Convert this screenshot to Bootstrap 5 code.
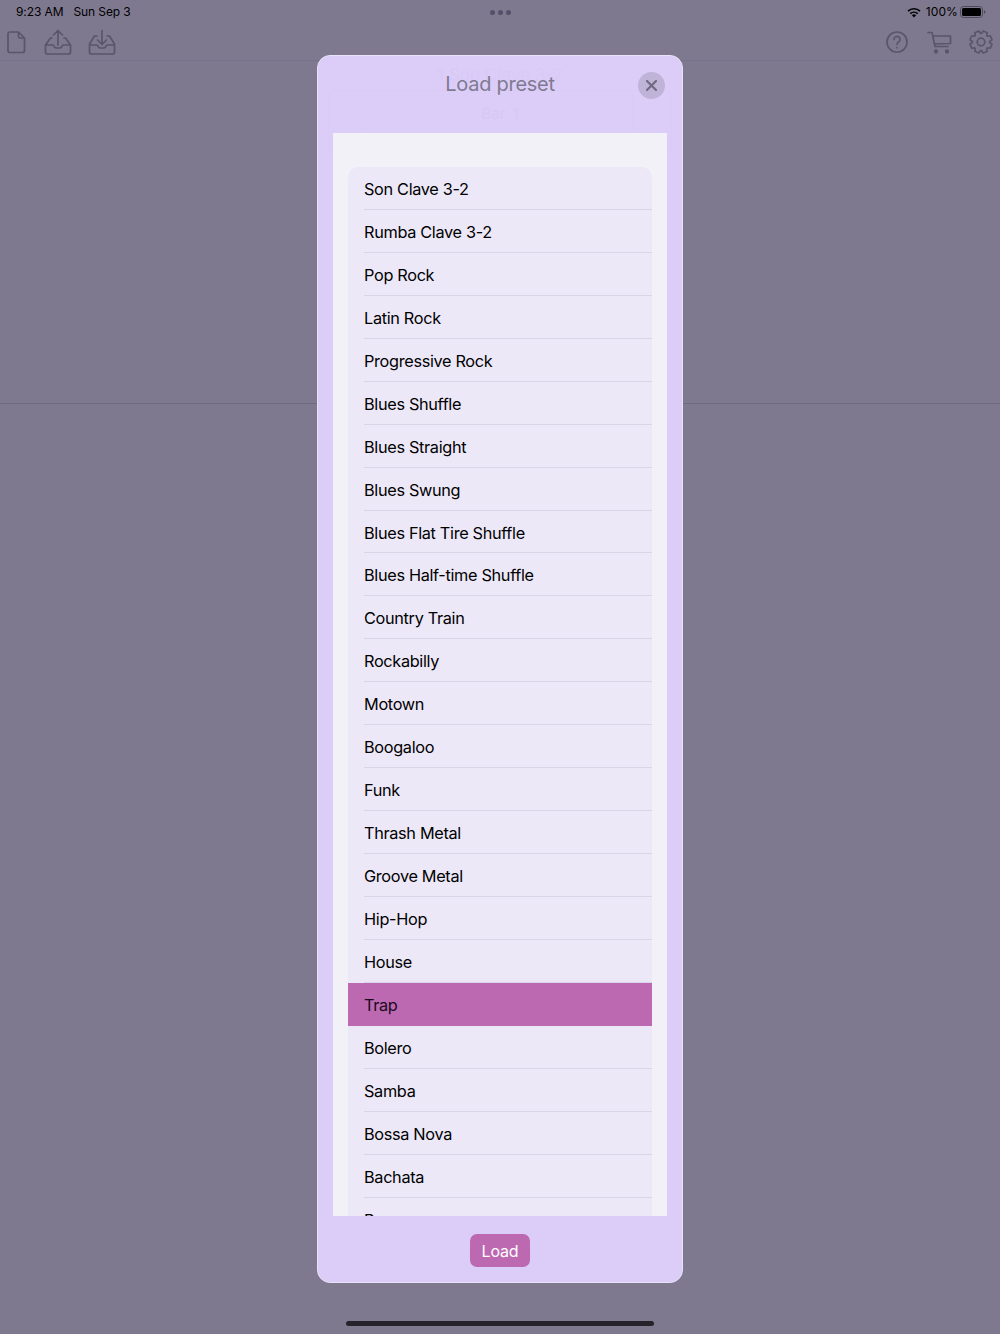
<!DOCTYPE html>
<html lang="en">
<head>
  <meta charset="UTF-8">
  <title>Load preset</title>
  <link href="https://cdn.jsdelivr.net/npm/bootstrap@5.3.3/dist/css/bootstrap.min.css" rel="stylesheet">
  <style>
    body { background: #7f798f; font-family: Inter, "Liberation Sans", sans-serif; height: 1334px; overflow: hidden; position: relative; }
    .status-row { height: 24px; padding: 0 16px; font-size: 12px; color: #000; letter-spacing: -.1px; }
    .status-date { margin-left: 2px; }
    .status-dots { gap: 3px; }
    .status-dots i { width: 5px; height: 5px; border-radius: 50%; background: #55506a; display: block; }
    .status-third { flex: 1 1 0; }
    .status-pct { letter-spacing: .1px; margin-left: 1px; margin-right: -2px; }
    .status-batt { margin-right: -2px; }
    .tool-row { height: 37px; padding: 0 7px; border-bottom: 1px solid #77718a; }
    .tool-row svg { display: block; fill: none; stroke: #59556a; stroke-width: 1.7; stroke-linecap: round; stroke-linejoin: round; }
    .tool-doc { margin-right: 18px; }
    .tool-down { margin-left: 16px; }
    .tool-cart { margin-left: 19px; }
    .tool-gear { margin-left: 17px; }
    .mid-rule { height: 1px; background: #6f6a80; margin-top: 342px; }
    .sheet { position: absolute; left: 317px; top: 55px; width: 366px; height: 1228px; background: #dbcdf8; border: 1px solid #e9e2f9; border-radius: 13px; overflow: hidden; }
    .sheet-head { height: 77px; position: relative; }
    .ghost-frame { position: absolute; left: 10px; right: 10px; top: 34px; height: 60px; border: 1px solid #d9cbf6; border-radius: 6px; }
    .ghost-frame::before, .ghost-frame::after { content: ""; position: absolute; top: 0; bottom: 0; width: 1px; background: #d9cbf6; }
    .ghost-frame::before { left: 36px; }
    .ghost-frame::after { right: 38px; }
    .ghost-song { position: absolute; left: 0; right: 0; top: 9px; font-size: 17px; color: #d8caf5; line-height: 20px; }
    .sheet-title { position: relative; font-size: 20px; line-height: 57px; color: #7f7a90; letter-spacing: -.28px; }
    .ghost-bar { position: relative; font-size: 15px; color: #d6c8f3; line-height: 1; margin-top: -7px; word-spacing: 3px; }
    .close-round { position: absolute; top: 16px; right: 17px; width: 27px; height: 27px; border-radius: 50%; background: #c0b3d8; border: 0; padding: 0; }
    .close-round svg { display: block; margin: auto; stroke: #6f6a80; stroke-width: 2.2; stroke-linecap: round; }
    .sheet-body { position: relative; height: 1083px; margin: 0 15px; background: #f2f1f8; padding: 34px 15px 0; overflow: hidden; }
    .preset-list { border-radius: 10px 10px 0 0; overflow: hidden; background: #ede8f8; }
    .preset-row { height: 42.95px; padding-left: 16px; font-size: 16.3px; color: #000; letter-spacing: -.33px; line-height: 43px; }
    .preset-row span { display: block; height: 100%; padding-top: 1px; border-bottom: 1px solid #d9d5e6; }
    .preset-row.picked { background: #bc69b2; color: #1a0a1c; }
    .preset-row.picked span { border-bottom-color: transparent; }
    .sheet-foot { height: 66px; padding-top: 3px; }
    .load-btn { background: #bc69b2; color: #fff; border: 0; border-radius: 7px; width: 60px; height: 33px; padding: 0; font-size: 16px; letter-spacing: -.2px; }
    .home-bar { position: absolute; left: 346px; top: 1321px; width: 308px; height: 5px; border-radius: 3px; background: #26242a; }
  </style>
</head>
<body>

  <!-- status bar -->
  <div class="status-row d-flex align-items-center">
    <div class="status-third d-flex gap-2"><span>9:23 AM</span><span class="status-date">Sun Sep 3</span></div>
    <div class="status-dots d-flex"><i></i><i></i><i></i></div>
    <div class="status-third d-flex justify-content-end align-items-center gap-1">
      <svg width="14" height="11" viewBox="0 0 14 11"><path d="M7 10.6 4.9 8.2a3 3 0 0 1 4.2 0z" fill="#000"/><path d="M3.3 6.7a5.4 5.4 0 0 1 7.4 0M1 4.2a8.6 8.6 0 0 1 12 0" fill="none" stroke="#000" stroke-width="1.7"/></svg>
      <span class="status-pct">100%</span>
      <svg class="status-batt" width="26" height="12" viewBox="0 0 26 12"><rect x=".5" y=".5" width="22" height="11" rx="3" fill="none" stroke="#4d4a58"/><rect x="2" y="2" width="19" height="8" rx="1.6" fill="#000"/><path d="M24 4.2c1 .3 1.4 1 1.4 1.8s-.4 1.5-1.4 1.8z" fill="#4d4a58"/></svg>
    </div>
  </div>

  <!-- toolbar -->
  <div class="tool-row d-flex align-items-center justify-content-between">
    <div class="d-flex align-items-center">
      <svg class="tool-doc" width="19" height="24" viewBox="0 0 19 24"><path d="M3 2h8.500L17.500 8v12.500a2 2 0 0 1-2 2H3a2 2 0 0 1-2-2V4a2 2 0 0 1 2-2zM11.500 2v4.500a1.500 1.500 0 0 0 1.500 1.500h4.500"/></svg>
      <svg width="28" height="26" viewBox="0 0 28 26"><path d="M14 16V2M9.500 6 14 1.500 18.500 6M8 9H6.500L1.500 16v7a2 2 0 0 0 2 2h21a2 2 0 0 0 2-2v-7l-5-7H20M1.500 16h7.500c1 0 1 3 3 3h4c2 0 2-3 3-3h7.500"/></svg>
      <svg class="tool-down" width="28" height="26" viewBox="0 0 28 26"><path d="M14 1.500V15M9.500 11 14 15.500 18.500 11M9 7H6.500L1.500 15v8a2 2 0 0 0 2 2h21a2 2 0 0 0 2-2v-8l-5-8H19M1.500 16h7.500c1 0 1 3 3 3h4c2 0 2-3 3-3h7.500"/></svg>
    </div>
    <div class="d-flex align-items-center">
      <svg width="22" height="22" viewBox="0 0 22 22"><circle cx="11" cy="11" r="10"/><path d="M8 8.500a3 3 0 1 1 4.600 2.500c-1 .7-1.600 1.200-1.600 2.500M11 16.500v.2"/></svg>
      <svg class="tool-cart" width="25" height="23" viewBox="0 0 25 23"><path d="M1 1.500h4l3 14h13M5.800 5h17.700v7.500L7.300 13"/><circle cx="9" cy="20.500" r="1.300" fill="#59556a"/><circle cx="20" cy="20.500" r="1.300" fill="#59556a"/></svg>
      <svg class="tool-gear" width="24" height="24" viewBox="0 0 24 24"><circle cx="12" cy="12" r="3.800"/><path id="gearPath"/></svg>
    </div>
  </div>
  <div class="mid-rule"></div>

  <!-- load preset sheet -->
  <div class="sheet d-flex flex-column">
    <div class="sheet-head text-center">
      <div class="ghost-song">1 Son Clave 3-2</div>
      <div class="ghost-frame"></div>
      <div class="sheet-title">Load preset</div>
      <div class="ghost-bar">Bar 1</div>
      <button type="button" class="close-round" aria-label="Close">
        <svg width="11" height="11" viewBox="0 0 11 11"><path d="M1 1l9 9M10 1l-9 9"/></svg>
      </button>
    </div>
    <div class="sheet-body">
      <div class="preset-list" id="presetList"></div>
    </div>
    <div class="sheet-foot d-flex align-items-center justify-content-center">
      <button type="button" class="btn load-btn">Load</button>
    </div>
  </div>

  <div class="home-bar"></div>

<script>
  const presets = ['Son Clave 3-2', 'Rumba Clave 3-2', 'Pop Rock', 'Latin Rock', 'Progressive Rock', 'Blues Shuffle',
    'Blues Straight', 'Blues Swung', 'Blues Flat Tire Shuffle', 'Blues Half-time Shuffle', 'Country Train', 'Rockabilly',
    'Motown', 'Boogaloo', 'Funk', 'Thrash Metal', 'Groove Metal', 'Hip-Hop', 'House', 'Trap', 'Bolero', 'Samba',
    'Bossa Nova', 'Bachata', 'Reggae'];
  const list = document.getElementById('presetList');
  presets.forEach(name => {
    const row = document.createElement('div');
    row.className = 'preset-row' + (name === 'Trap' ? ' picked' : '');
    const label = document.createElement('span');
    label.textContent = name;
    row.appendChild(label);
    list.appendChild(row);
  });

  // eight tooth cog outline for the settings icon
  const pts = [];
  for (let k = 0; k < 8; k++) {
    const mid = k * Math.PI / 4 + Math.PI / 8;
    [[-.34, 8.6], [-.2, 11.2], [.2, 11.2], [.34, 8.6]].forEach(([off, r]) => {
      pts.push((12 + r * Math.cos(mid + off)).toFixed(2) + ' ' + (12 + r * Math.sin(mid + off)).toFixed(2));
    });
  }
  document.getElementById('gearPath').setAttribute('d', 'M' + pts.join('L') + 'Z');
</script>

</body>
</html>
